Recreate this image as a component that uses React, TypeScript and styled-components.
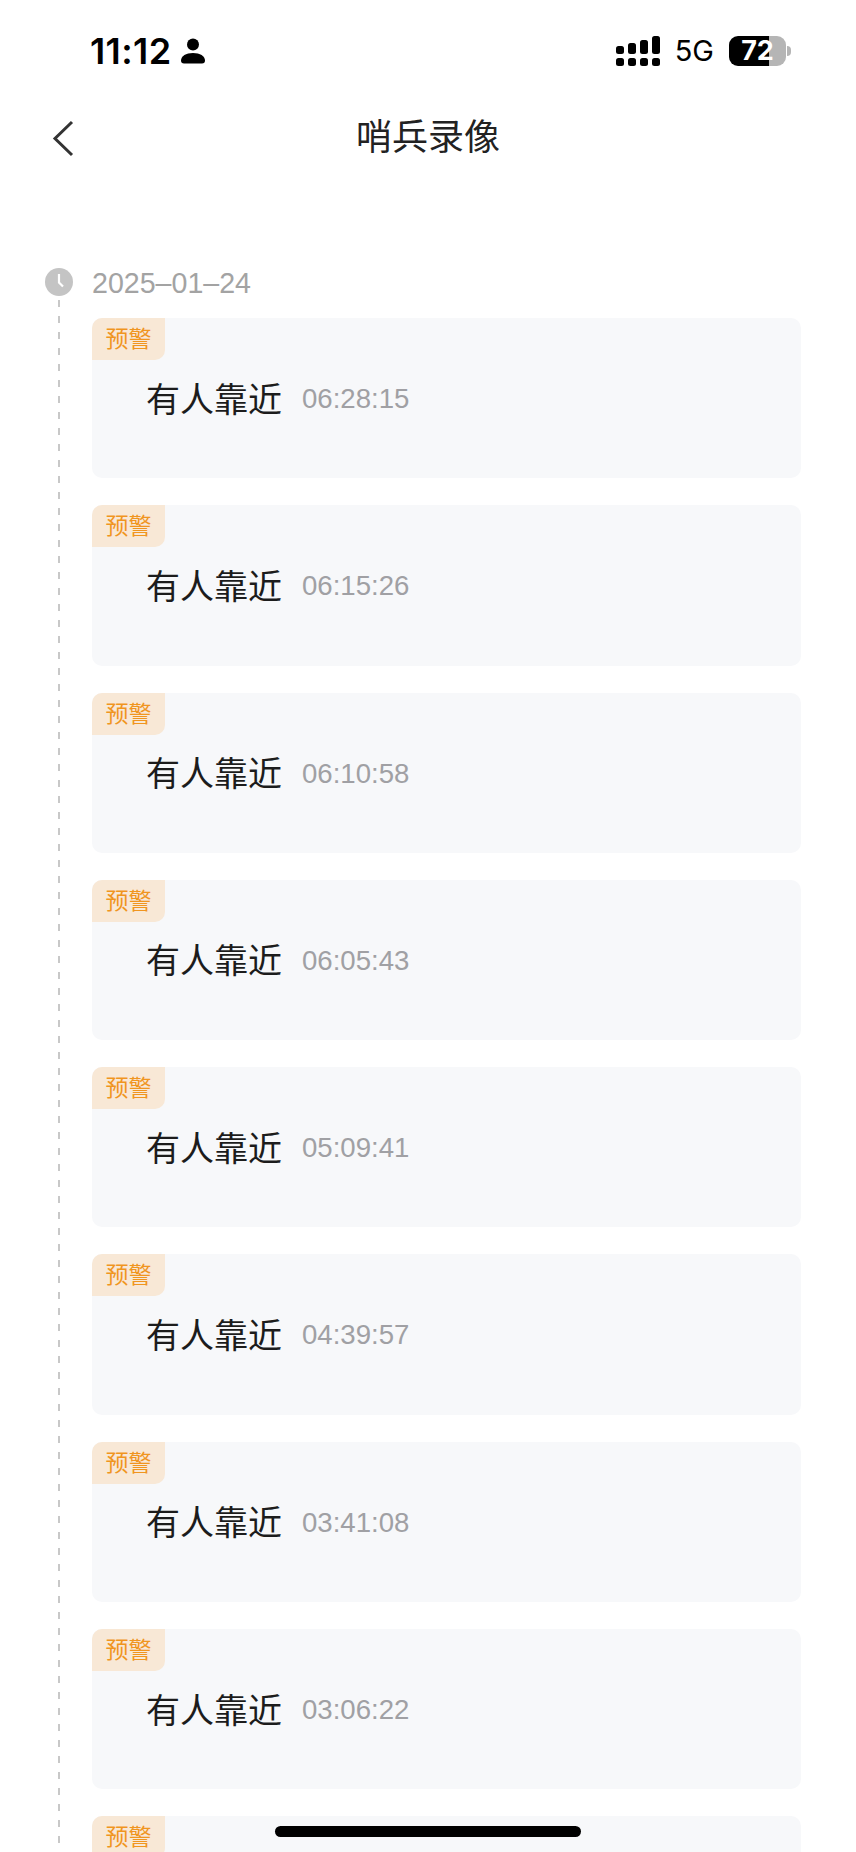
import styled, { createGlobalStyle } from 'styled-components';

const GlobalStyle = createGlobalStyle`
    html, body {
        margin: 0;
        padding: 0;
        background-color: #ffffff;
        font-family: "Liberation Sans", "Noto Sans CJK SC", sans-serif;
    }
`;

const Screen = styled.div`
    position: relative;
    width: 856px;
    height: 1852px;
    overflow: hidden;
    background-color: #ffffff;
`;

const StatusBar = styled.div`
    height: 100px;
    display: flex;
    align-items: center;
    justify-content: space-between;
    padding: 2px 70px 0 90px;
    box-sizing: border-box;
`;

const StatusLeft = styled.div`
    display: flex;
    align-items: center;
    gap: 9px;
`;

const Clock = styled.span`
    font-family: Inter, sans-serif;
    font-size: 36px;
    font-weight: 600;
    letter-spacing: 0.4px;
    color: #000000;
    line-height: 40px;
`;

const StatusRight = styled.div`
    display: flex;
    align-items: center;
`;

const Network = styled.span`
    font-family: Inter, sans-serif;
    font-size: 29px;
    font-weight: 400;
    color: #000000;
    margin: 0 15px 0 15px;
    line-height: 30px;
`;

const Battery = styled.div`
    position: relative;
    width: 57px;
    height: 30px;
    border-radius: 9px;
    background: linear-gradient(to right, #000000 70%, #b5b5b5 70%);
    color: #ffffff;
    font-family: Inter, sans-serif;
    font-size: 27px;
    font-weight: 700;
    line-height: 30px;
    text-align: center;

    &::after {
        content: '';
        position: absolute;
        left: 58px;
        top: 10px;
        width: 4px;
        height: 10px;
        border-radius: 0 4px 4px 0;
        background-color: #b5b5b5;
    }
`;

const Header = styled.div`
    position: relative;
    height: 68px;
    display: flex;
    align-items: center;
    justify-content: center;
`;

const Title = styled.h1`
    margin: 0;
    font-size: 36px;
    font-weight: 400;
    color: #222222;
`;

const BackButton = styled.button`
    position: absolute;
    left: 50px;
    top: 19px;
    width: 26px;
    height: 38px;
    padding: 0;
    border: none;
    background: none;
`;

const Timeline = styled.div`
    display: grid;
    grid-template-columns: 28px 1fr;
    column-gap: 19px;
    margin-top: 100px;
    padding: 0 55px 0 45px;
`;

const Rail = styled.div`
    display: flex;
    flex-direction: column;
    align-items: center;
`;

const RailDot = styled.svg`
    width: 28px;
    height: 28px;
    flex-shrink: 0;
`;

const RailLine = styled.div`
    width: 2px;
    flex: 1;
    margin-top: 4px;
    background-image: repeating-linear-gradient(to bottom, #c8c8c8 0 7px, transparent 7px 16px);
`;

const DateLabel = styled.div`
    height: 29px;
    font-size: 28.6px;
    line-height: 28px;
    color: #a3a3a3;
    margin-top: 1px;
`;

const CardList = styled.div`
    display: flex;
    flex-direction: column;
    gap: 27px;
    margin-top: 20px;
`;

const Card = styled.div`
    height: 160.3px;
    border-radius: 10px;
    background-color: #f7f8fa;
`;

const Tag = styled.div`
    width: 73px;
    height: 42px;
    border-radius: 10px 0 10px 0;
    background-color: #f8e8d6;
    color: #f0951f;
    font-size: 23px;
    line-height: 43px;
    text-align: center;
`;

const CardRow = styled.div`
    display: flex;
    align-items: center;
    margin-top: 14px;
    padding-left: 54px;
    height: 50px;
`;

const EventName = styled.span`
    font-size: 34px;
    color: #1c1c1c;
    margin-bottom: 4px;
`;

const EventTime = styled.span`
    margin-left: 20px;
    font-size: 27.6px;
    color: #a0a0a4;
`;

const HomeBar = styled.div`
    position: absolute;
    left: 275px;
    top: 1826px;
    width: 306px;
    height: 11px;
    border-radius: 6px;
    background-color: #000000;
`;

const events = [
    '06:28:15',
    '06:15:26',
    '06:10:58',
    '06:05:43',
    '05:09:41',
    '04:39:57',
    '03:41:08',
    '03:06:22',
];

function SignalIcon() {
    return (
        <svg width="44" height="30" viewBox="0 0 44 30" fill="#000000">
            <rect x="0" y="22" width="8" height="8" rx="2.500" />
            <rect x="12" y="22" width="8" height="8" rx="2.500" />
            <rect x="24" y="22" width="8" height="8" rx="2.500" />
            <rect x="36" y="22" width="8" height="8" rx="2.500" />
            <rect x="0" y="10" width="8" height="8" rx="2.500" />
            <rect x="12" y="7" width="8" height="11" rx="2.500" />
            <rect x="24" y="4" width="8" height="14" rx="2.500" />
            <rect x="36" y="0" width="8" height="18" rx="2.500" />
        </svg>
    );
}

function PersonIcon() {
    return (
        <svg width="24" height="26" viewBox="0 0 24 26" fill="#000000">
            <circle cx="12" cy="6.500" r="6" />
            <path d="M0 22.500C0 18 5 15 12 15s12 3 12 7.500c0 2-1 3-3 3H3c-2 0-3-1-3-3z" />
        </svg>
    );
}

export default function App() {
    return (
        <Screen>
            <GlobalStyle />
            <StatusBar>
                <StatusLeft>
                    <Clock>11:12</Clock>
                    <PersonIcon />
                </StatusLeft>
                <StatusRight>
                    <SignalIcon />
                    <Network>5G</Network>
                    <Battery>72</Battery>
                </StatusRight>
            </StatusBar>
            <Header>
                <BackButton aria-label="返回">
                    <svg width="26" height="38" viewBox="0 0 26 38" fill="none" stroke="#333333" strokeWidth="3">
                        <path d="M22 3L5 19.500L22 36" />
                    </svg>
                </BackButton>
                <Title>哨兵录像</Title>
            </Header>
            <Timeline>
                <Rail>
                    <RailDot viewBox="0 0 28 28">
                        <circle cx="14" cy="14" r="14" fill="#c4c4c4" />
                        <path d="M14 6v8.500l4 4" fill="none" stroke="#ffffff" strokeWidth="2.200" />
                    </RailDot>
                    <RailLine />
                </Rail>
                <div>
                    <DateLabel>2025–01–24</DateLabel>
                    <CardList>
                        {events.map((time, index) => (
                            <Card key={index}>
                                <Tag>预警</Tag>
                                <CardRow>
                                    <EventName>有人靠近</EventName>
                                    <EventTime>{time}</EventTime>
                                </CardRow>
                            </Card>
                        ))}
                        {/* the ninth card runs off the bottom of the screen */}
                        <Card>
                            <Tag>预警</Tag>
                        </Card>
                    </CardList>
                </div>
            </Timeline>
            <HomeBar />
        </Screen>
    );
}
